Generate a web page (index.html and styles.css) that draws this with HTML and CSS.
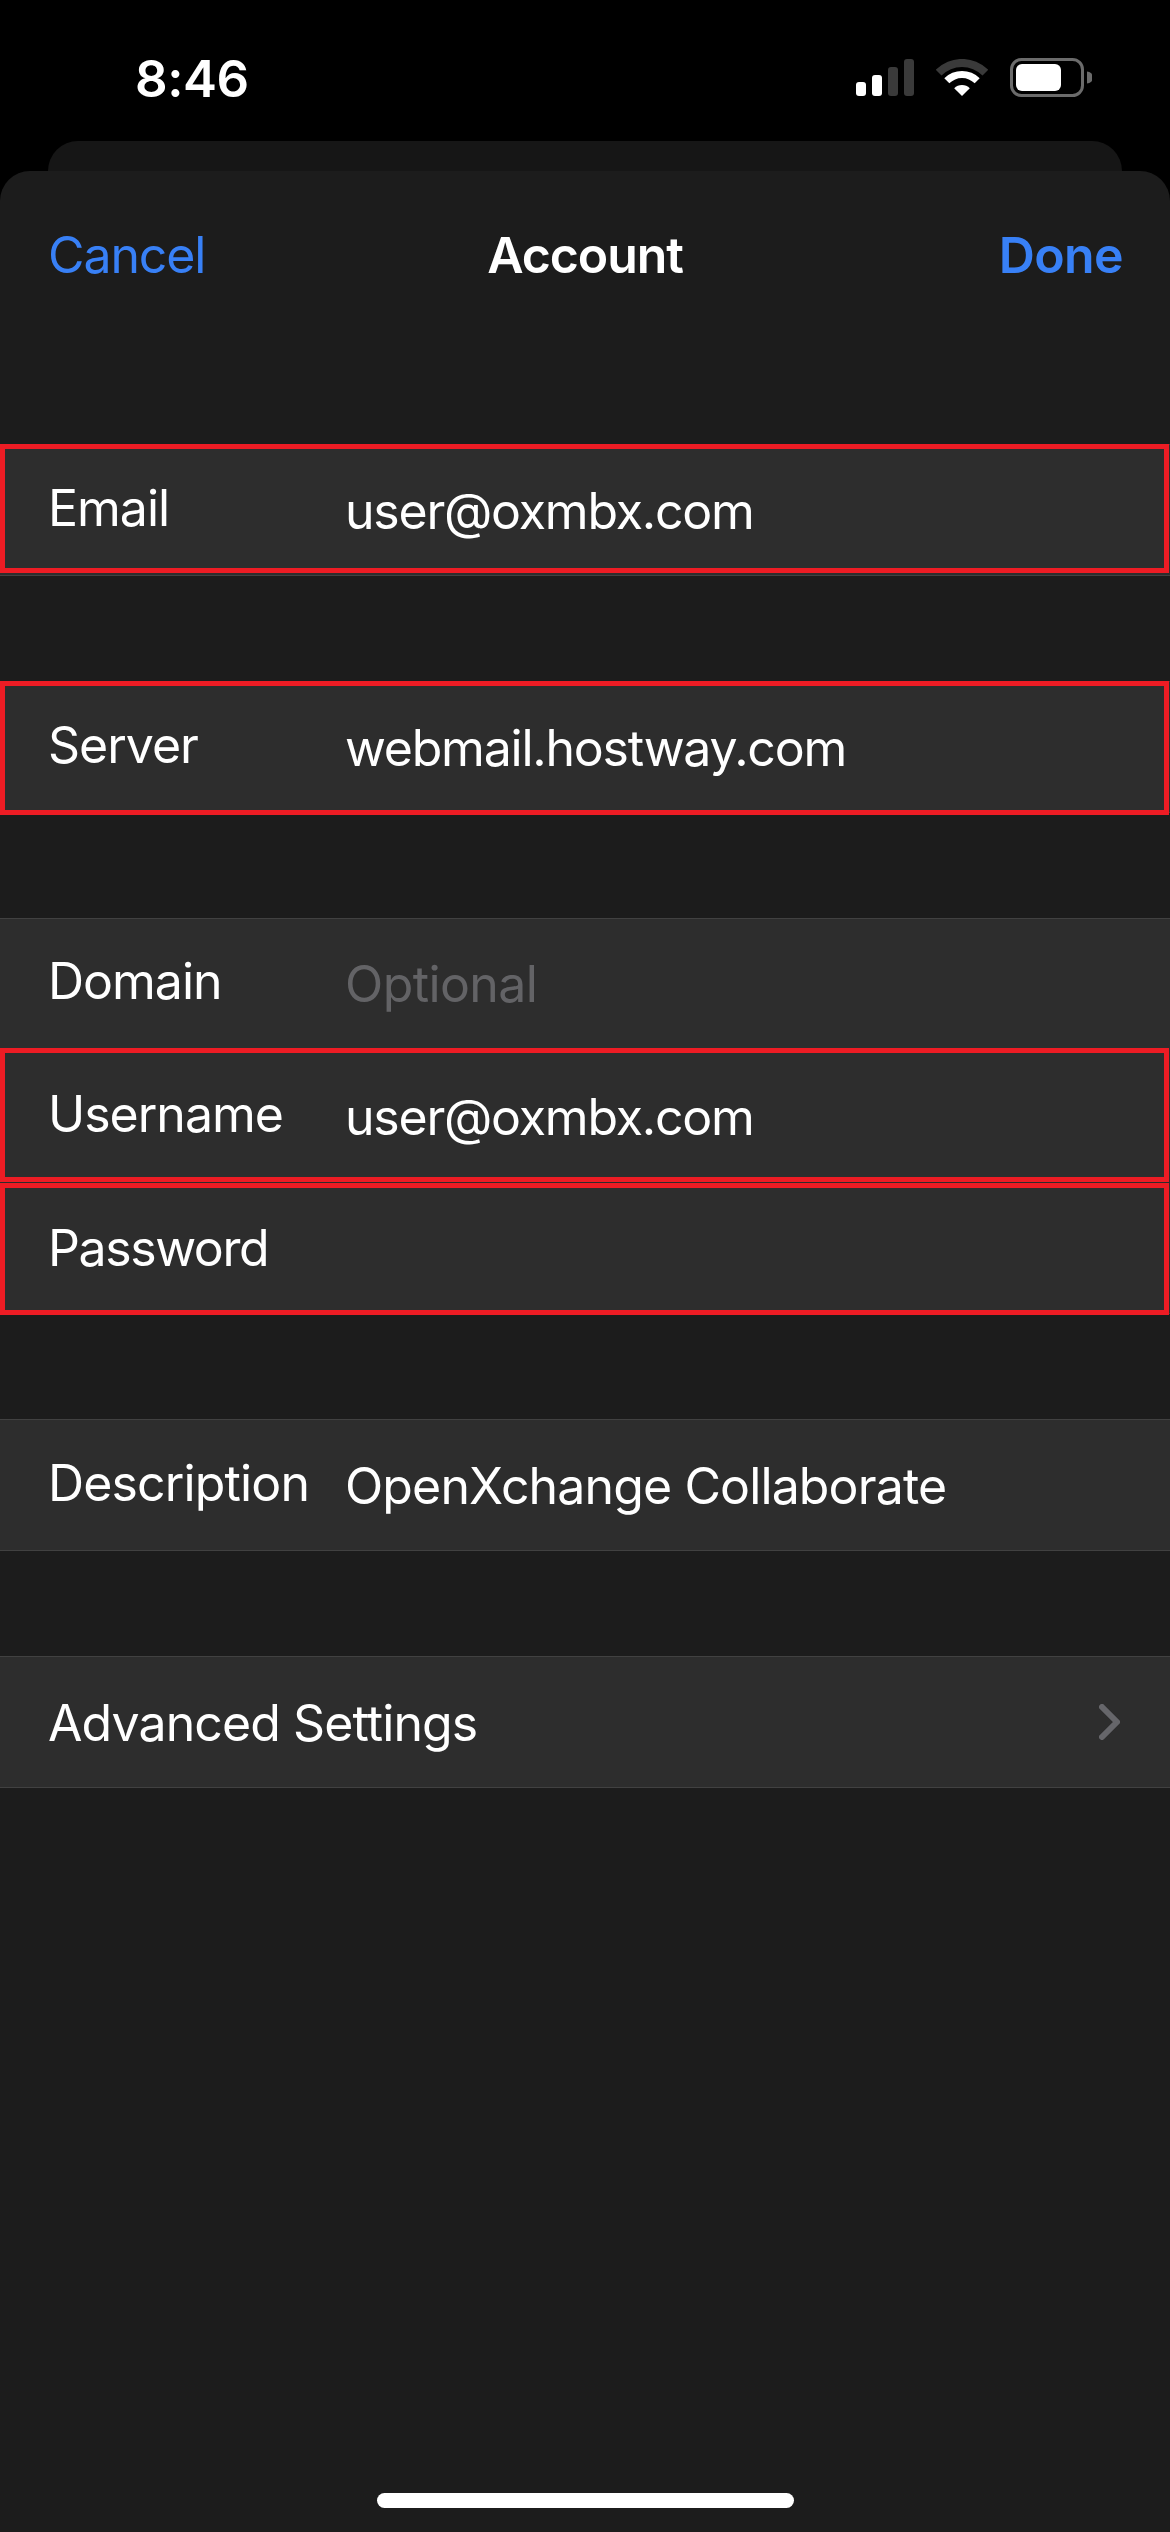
FILE: index.html
```html
<!DOCTYPE html>
<html lang="en">
<head>
<meta charset="utf-8">
<title>Account</title>
<link rel="stylesheet" href="styles.css">
</head>
<body>
<div class="screen">
  <header class="status">
    <span class="time">8:46</span>
    <div class="status-icons">
      <svg class="signal" width="58" height="37" viewBox="0 0 58 37">
        <rect x="0" y="23" width="10" height="14" rx="3" fill="#fff"/>
        <rect x="16" y="16" width="10" height="21" rx="3" fill="#fff"/>
        <rect x="32" y="8" width="10" height="29" rx="3" fill="#3a3a3a"/>
        <rect x="48" y="0" width="10" height="37" rx="3" fill="#3a3a3a"/>
      </svg>
      <svg class="wifi" width="52" height="37" viewBox="0 0 51 37">
        <path d="M-.7 10.8A37 37 0 0 1 51.7 10.8L46 16.5A29 29 0 0 0 5 16.5Z" fill="#3a3a3a"/>
        <path d="M7.8 19.3A25 25 0 0 1 43.2 19.3L38.2 24.3A18 18 0 0 0 12.8 24.3Z" fill="#fff"/>
        <path d="M17.7 29.2A11 11 0 0 1 33.3 29.2L25.5 37Z" fill="#fff"/>
      </svg>
      <svg class="battery" width="82" height="39" viewBox="0 0 82 39">
        <rect x="1.5" y="1.5" width="71" height="36" rx="10" fill="none" stroke="#6b6b6b" stroke-width="3"/>
        <rect x="6" y="6" width="45" height="27" rx="6" fill="#fff"/>
        <path d="M77 13.5A6 6 0 0 1 77 25.5Z" fill="#6b6b6b"/>
      </svg>
    </div>
  </header>
  <div class="back-card"></div>
  <main class="sheet">
    <nav class="nav">
      <span class="nav-btn">Cancel</span>
      <span class="nav-title">Account</span>
      <span class="nav-btn nav-done">Done</span>
    </nav>
    <section class="group">
      <div class="row marked frame-email"><span class="label">Email</span><span class="value">user@oxmbx.com</span></div>
    </section>
    <section class="group">
      <div class="row marked frame-server"><span class="label">Server</span><span class="value">webmail.hostway.com</span></div>
    </section>
    <section class="group group-login">
      <div class="row row-domain"><span class="label">Domain</span><span class="value placeholder">Optional</span></div>
      <div class="row row-user marked frame-user"><span class="label">Username</span><span class="value">user@oxmbx.com</span></div>
      <div class="row row-pass marked frame-pass"><span class="label">Password</span></div>
    </section>
    <section class="group">
      <div class="row row-desc"><span class="label">Description</span><span class="value">OpenXchange Collaborate</span></div>
    </section>
    <section class="group">
      <div class="row row-link">
        <span class="label">Advanced Settings</span>
        <svg class="chevron" width="21" height="36" viewBox="0 0 21 36"><path d="M3 3L18 18L3 33" fill="none" stroke="#66666a" stroke-width="6" stroke-linecap="round" stroke-linejoin="round"/></svg>
      </div>
    </section>
  </main>
  <div class="home-bar"></div>
</div>
</body>
</html>
```
FILE: styles.css
```css
* { box-sizing: border-box; }
html, body { margin: 0; padding: 0; background: #000; }
.screen {
  width: 1170px;
  height: 2532px;
  position: relative;
  overflow: hidden;
  background: #000;
  display: flex;
  flex-direction: column;
  font-family: Inter, "Liberation Sans", sans-serif;
  color: #fff;
}
.status {
  height: 141px;
  flex: none;
  display: flex;
  justify-content: space-between;
  align-items: flex-start;
  padding: 51px 78px 0 135px;
}
.time { font-size: 51px; font-weight: 600; line-height: 56px; letter-spacing: -0.5px; }
.status-icons { display: flex; align-items: center; gap: 22px; padding-top: 7px; }
.back-card {
  height: 30px;
  flex: none;
  margin: 0 48px;
  background: #161616;
  border-radius: 30px 30px 0 0;
}
.sheet {
  flex: 1;
  background: #1c1c1c;
  border-radius: 30px 30px 0 0;
  display: flex;
  flex-direction: column;
  gap: 105px;
}
.nav {
  height: 168px;
  display: flex;
  justify-content: space-between;
  align-items: center;
  padding: 0 47px 0 48px;
  position: relative;
  font-size: 50px;
  letter-spacing: -1.1px;
}
.nav-btn { color: #3880f6; }
.nav-done { font-weight: 600; letter-spacing: -0.6px; }
.nav-title { font-weight: 600; position: absolute; left: 0; right: 0; text-align: center; }
.group {
  background: #2d2d2d;
  border-top: 1px solid #414141;
  border-bottom: 1px solid #414141;
}
.group-login { padding-bottom: 1px; }
.row {
  height: 130px;
  display: flex;
  align-items: center;
  position: relative;
  padding: 0 0 4px 48px;
  font-size: 50px;
  letter-spacing: -1px;
  white-space: nowrap;
}
.group-login .row { height: 131px; }
.row-domain { padding-bottom: 7px; }
.row-user { padding-bottom: 4px; }
.row-pass { padding: 2px 0 0 48px; letter-spacing: -1.4px; }
.row-desc { letter-spacing: -0.85px; }
.marked::after {
  content: "";
  position: absolute;
  border: 5px solid #ed1c24;
}
.frame-email::after { inset: -1px 1px 2px 0; }
.frame-server::after { inset: -1px 1px -3px 0; }
.frame-user::after { inset: -2px 1px -1px 0; }
.frame-pass::after { inset: 2px 1px -3px 0; }
.label { width: 297px; flex: none; }
.value { position: relative; top: 3px; letter-spacing: -1.22px; }
.row-desc .value { letter-spacing: -0.87px; }
.value.placeholder { color: #636366; letter-spacing: -0.6px; }
.row-link { justify-content: space-between; padding: 2px 50px 0 48px; letter-spacing: -0.9px; }
.chevron { flex: none; margin-top: -2px; }
.home-bar {
  position: absolute;
  left: 377px;
  bottom: 24px;
  width: 417px;
  height: 15px;
  background: #fff;
  border-radius: 8px;
}
```
